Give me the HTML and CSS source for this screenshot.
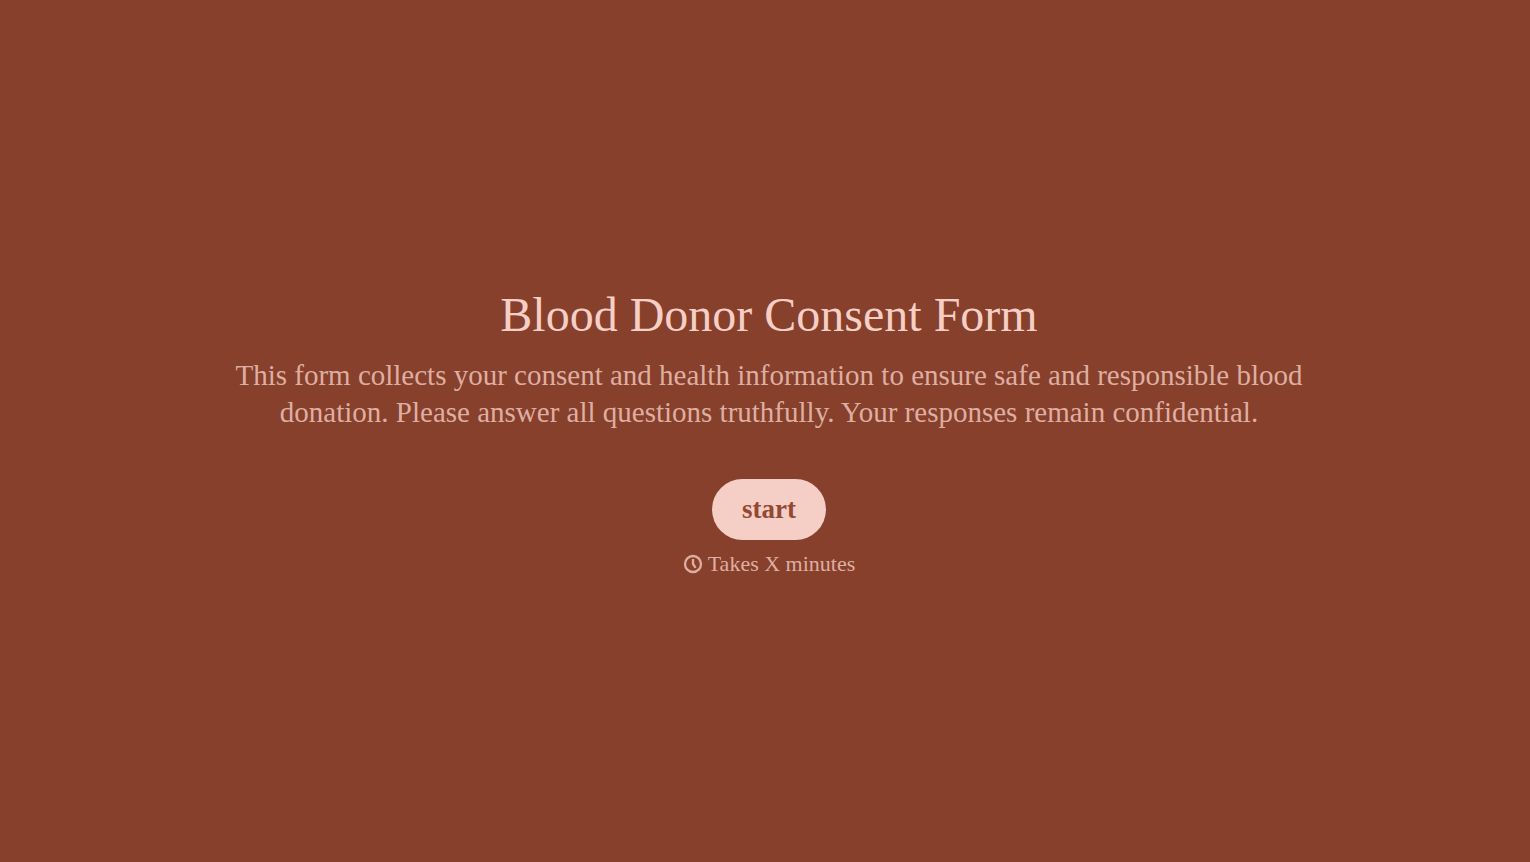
FILE: index.html
```html
<!DOCTYPE html>
<html lang="en">
<head>
<meta charset="utf-8">
<meta name="viewport" content="width=device-width, initial-scale=1">
<title>Blood Donor Consent Form</title>
<link rel="stylesheet" href="styles.css">
</head>
<body>
<main class="welcome">
  <h1 class="title">Blood Donor Consent Form</h1>
  <p class="description">This form collects your consent and health information to ensure safe and responsible blood donation. Please answer all questions truthfully. Your responses remain confidential.</p>
  <button class="start" type="button">start</button>
  <p class="duration">
    <svg class="clock" viewBox="0 0 20 20" aria-hidden="true"><circle cx="10" cy="10" r="8"/><path d="M10 5v5l2.600 3.800"/></svg>
    <span>Takes X minutes</span>
  </p>
</main>
</body>
</html>
```

FILE: styles.css
```css
* {
  box-sizing: border-box;
}

body {
  margin: 0;
  background: #87402b;
  color: #f5cec6;
  font-family: "Liberation Serif", "Times New Roman", serif;
}

.welcome {
  display: flex;
  flex-direction: column;
  align-items: center;
  justify-content: center;
  min-height: 100vh;
  padding: 0 224px 0 232px;
  text-align: center;
}

.title {
  margin: 0 0 12px;
  font-size: 48px;
  font-weight: 400;
  line-height: 60px;
}

.description {
  margin: 0 0 48px;
  color: #dfaea2;
  font-size: 29px;
  line-height: 37px;
}

.start {
  padding: 12px 30px;
  border: 0;
  border-radius: 31px;
  background: #f5cec6;
  color: #924a33;
  font-family: inherit;
  font-size: 27px;
  font-weight: 700;
  line-height: 37px;
  cursor: pointer;
}

.duration {
  display: flex;
  align-items: center;
  gap: 5px;
  margin: 10px 0 0;
  color: #dfaea2;
  font-size: 22px;
  line-height: 28px;
}

.clock {
  width: 20px;
  height: 20px;
  fill: none;
  stroke: currentColor;
  stroke-width: 2.3;
}
```
